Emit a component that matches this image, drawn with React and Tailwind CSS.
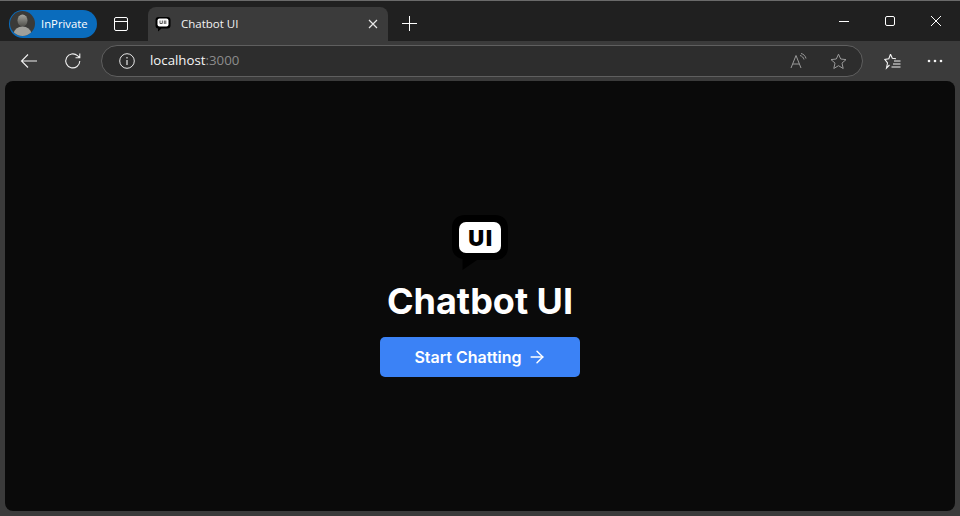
import React from 'react';
import { ArrowRight } from 'lucide-react';

const Logo = () => (
  <div className="relative w-[56px] h-[55px]">
    <svg width="56" height="55" viewBox="0 0 56 55" className="absolute inset-0">
      <path d="M13 0H43C51 0 56 5 56 13V32C56 40 51 45 43 45H25L10.500 55V44C4 43 0 38 0 32V13C0 5 5 0 13 0Z" fill="#000" />
    </svg>
    <div className="absolute left-[7px] top-[7px] w-[42px] h-[31px] pl-[2px] pt-[1px] rounded-[7px] bg-white flex items-center justify-center text-black font-['Inter',sans-serif] font-black text-[22px] leading-none tracking-[1.5px]">
      UI
    </div>
  </div>
);

const TabFavicon = () => (
  <svg width="16" height="17" viewBox="0 0 16 17">
    <path d="M3.500 1H12.500C14.500 1 15.500 2 15.500 4V9.500C15.500 11.500 14.500 12.500 12.500 12.500H6.500L3 15.500V12.500C1.500 12.500 0.500 11.500 0.500 9.500V4C0.500 2 1.500 1 3.500 1Z" fill="#000" />
    <rect x="2.500" y="2.500" width="11" height="8" rx="2" fill="#fff" />
    <path d="M5 4.500V7.500H7.300V4.500M9.300 4.500V8M10.800 4.500V8" stroke="#555" strokeWidth="1" fill="none" />
  </svg>
);

const Avatar = () => (
  <div className="w-[25px] h-[25px] rounded-full bg-[#3a3a38] overflow-hidden flex items-center justify-center">
    <svg width="25" height="25" viewBox="0 0 25 25">
      <defs>
        <linearGradient id="av" x1="0" y1="0" x2="0" y2="1">
          <stop offset="0" stopColor="#a5a59f" />
          <stop offset="1" stopColor="#4f4f4a" />
        </linearGradient>
      </defs>
      <ellipse cx="12.500" cy="9.500" rx="5" ry="6" fill="url(#av)" />
      <ellipse cx="12.500" cy="22" rx="8.500" ry="6.500" fill="#a0a09b" />
    </svg>
  </div>
);

export default function App() {
  return (
    <div className="w-[960px] h-[516px] flex flex-col overflow-hidden bg-[#3b3b3b] font-['Open_Sans',sans-serif] text-white">
      {/* window top edge + tab strip */}
      <div className="h-px bg-[#6a6a6a] shrink-0" />
      <div className="h-[40px] shrink-0 bg-[#202020] flex items-end">
        <div className="h-[34px] flex items-center self-end w-full">
          <div className="ml-[9px] mb-[1px] w-[88px] h-[28px] rounded-full bg-[#0a6cbd] flex items-center pl-[1px] shrink-0">
            <Avatar />
            <span className="ml-[6px] text-[11.3px] leading-none text-white">InPrivate</span>
          </div>
          <div className="ml-[17px] w-[14px] h-[14px] shrink-0 rounded-[2px] border border-white">
            <div className="h-[4px] border-b border-white" />
          </div>
          <div className="ml-[20px] w-[240px] h-[34px] self-end shrink-0 rounded-t-[8px] bg-[#3b3b3b] flex items-center pl-[7px] pr-[10px]">
            <TabFavicon />
            <span className="ml-[10px] text-[11.5px] leading-none text-[#f2f2f2]">Chatbot UI</span>
            <svg className="ml-auto" width="10" height="10" viewBox="0 0 10 10">
              <path d="M1 1L9 9M9 1L1 9" stroke="#e8e8e8" strokeWidth="1.200" />
            </svg>
          </div>
          <svg className="ml-[14px] mb-[2px] shrink-0" width="15" height="15" viewBox="0 0 15 15">
            <path d="M7.500 0V15M0 7.500H15" stroke="#fff" strokeWidth="1" />
          </svg>
          <div className="ml-auto flex items-center shrink-0 -mt-[7px]">
            <svg width="46" height="14" viewBox="0 0 46 14">
              <path d="M18 7.500H28" stroke="#fff" strokeWidth="1" />
            </svg>
            <svg width="46" height="14" viewBox="0 0 46 14">
              <rect x="18.500" y="2.500" width="9" height="9" rx="1.500" stroke="#fff" strokeWidth="1" fill="none" />
            </svg>
            <svg width="46" height="14" viewBox="0 0 46 14" className="mr-[1px]">
              <path d="M18 2L28 12M28 2L18 12" stroke="#fff" strokeWidth="1" />
            </svg>
          </div>
        </div>
      </div>

      {/* toolbar */}
      <div className="h-[40px] shrink-0 flex items-center">
        <svg className="ml-[20px] shrink-0" width="18" height="16" viewBox="0 0 18 16">
          <path d="M17 8H1.500M8 1.500L1.500 8L8 14.500" stroke="#f0f0f0" strokeWidth="1.100" fill="none" />
        </svg>
        <svg className="ml-[26px] shrink-0" width="18" height="18" viewBox="0 0 18 18">
          <path d="M15.800 9A7 7 0 1 1 13.500 3.700L15.500 5.500M15.800 1.500V5.800H11.500" stroke="#f0f0f0" strokeWidth="1.100" fill="none" />
        </svg>
        <div className="ml-[19px] w-[762px] h-[32px] rounded-full border border-[#5f5f5f] bg-[#2d2d2d] flex items-center pl-[17px] pr-[15px] shrink-0">
          <svg width="16" height="16" viewBox="0 0 16 16">
            <circle cx="8" cy="8" r="7.300" stroke="#e8e8e8" strokeWidth="1" fill="none" />
            <path d="M8 7V12M8 4V5.400" stroke="#e8e8e8" strokeWidth="1.200" />
          </svg>
          <span className="ml-[15px] text-[13.25px] leading-none font-medium text-[#f5f5f5]">
            localhost<span className="font-normal text-[#8c8c8c]">:3000</span>
          </span>
          <svg className="ml-auto" width="17" height="16" viewBox="0 0 17 16">
            <path d="M1 15L6 2.500L11 15M2.800 11H9.200" stroke="#9a9a9a" strokeWidth="1" fill="none" />
            <path d="M10 2.500C12 3 13.500 4.500 14 6.500M11 0.500C13.500 1 15.500 3 16 5.500" stroke="#9a9a9a" strokeWidth="1" fill="none" />
          </svg>
          <svg className="ml-[23px]" width="17" height="17" viewBox="0 0 17 17">
            <path d="M8.500 1.200L10.700 6L16 6.600L12 10.100L13.200 15.500L8.500 12.700L3.800 15.500L5 10.100L1 6.600L6.300 6Z" stroke="#9a9a9a" strokeWidth="1" fill="none" />
          </svg>
        </div>
        <svg className="ml-[21px] shrink-0" width="17" height="17" viewBox="0 0 17 17">
          <path d="M6.500 1.200L8.300 5.300L12 5.700M5.500 12L2.500 15L3.500 10L0.800 6.400L4.800 5.700L6.500 1.200" stroke="#f5f5f5" strokeWidth="1.100" fill="none" />
          <path d="M10 8H16.500M9 11H16.500M7.500 14H16.500" stroke="#f5f5f5" strokeWidth="1" />
        </svg>
        <svg className="ml-[26px] shrink-0" width="16" height="4" viewBox="0 0 16 4">
          <circle cx="2" cy="2" r="1.300" fill="#f5f5f5" />
          <circle cx="8" cy="2" r="1.300" fill="#f5f5f5" />
          <circle cx="14" cy="2" r="1.300" fill="#f5f5f5" />
        </svg>
      </div>

      {/* page */}
      <div className="flex-1 mx-[5px] mb-[5px] rounded-[8px] bg-[#0a0a0a] flex flex-col items-center justify-center font-['Inter',sans-serif]">
        <Logo />
        <div className="mt-[11px] text-[36px] leading-[40px] font-bold text-white">Chatbot UI</div>
        <button className="mt-[16px] w-[200px] h-[40px] pl-[1px] rounded-[5px] bg-[#3b82f6] flex items-center justify-center gap-[5px] text-[16px] font-semibold text-white">
          Start Chatting
          <ArrowRight size={20} strokeWidth={1.75} />
        </button>
      </div>
    </div>
  );
}
